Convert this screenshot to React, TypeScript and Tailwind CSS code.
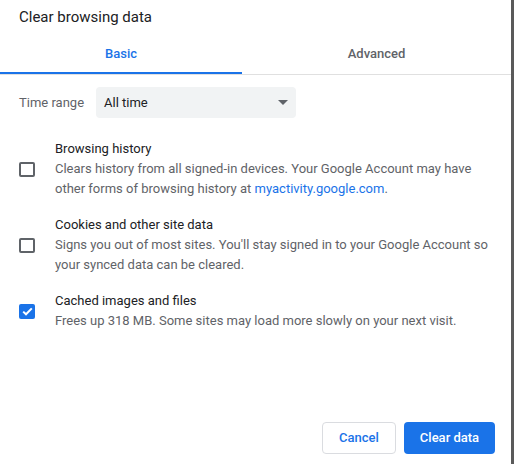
import React, { useState } from 'react';

type Item = {
  id: string;
  title: string;
  lines: React.ReactNode[];
};

const items: Item[] = [
  {
    id: 'history',
    title: 'Browsing history',
    lines: [
      'Clears history from all signed-in devices. Your Google Account may have',
      <>
        other forms of browsing history at <span className="text-[#1a73e8]">myactivity.google.com</span>.
      </>,
    ],
  },
  {
    id: 'cookies',
    title: 'Cookies and other site data',
    lines: [
      "Signs you out of most sites. You'll stay signed in to your Google Account so",
      'your synced data can be cleared.',
    ],
  },
  {
    id: 'cache',
    title: 'Cached images and files',
    lines: ['Frees up 318 MB. Some sites may load more slowly on your next visit.'],
  },
];

const Checkbox: React.FC<{ checked: boolean; onToggle: () => void }> = ({ checked, onToggle }) => (
  <button
    onClick={onToggle}
    className={`flex h-[15px] w-4 shrink-0 items-center justify-center rounded-[2px] ${
      checked ? 'bg-[#1a73e8]' : 'border-2 border-[#5f6368] bg-white'
    }`}
  >
    {checked && (
      <svg width="11" height="9" viewBox="0 0 11 9" fill="none">
        <path d="M1.2 4.6 L4 7.3 L9.8 1.4" stroke="white" strokeWidth="2" />
      </svg>
    )}
  </button>
);

const App: React.FC = () => {
  const [tab, setTab] = useState<'basic' | 'advanced'>('basic');
  const [checked, setChecked] = useState<Record<string, boolean>>({ history: false, cookies: false, cache: true });

  return (
    <div className="flex h-[464px] w-[514px] font-['Roboto',sans-serif] antialiased">
      <div className="flex flex-1 flex-col bg-white">
        {/* Title */}
        <div className="h-[33px] pl-[19px] pt-[7px] text-[15px] leading-5 text-[#202124]">Clear browsing data</div>

        {/* Tabs */}
        <div className="flex border-b border-[#e0e0e0]">
          <button
            onClick={() => setTab('basic')}
            className={`relative h-[41px] w-[242px] text-[13px] font-medium ${tab === 'basic' ? 'text-[#1a73e8]' : 'text-[#5f6368]'}`}
          >
            Basic
            {tab === 'basic' && <span className="absolute bottom-0 left-0 h-[2px] w-full bg-[#1a73e8]" />}
          </button>
          <button
            onClick={() => setTab('advanced')}
            className={`relative h-[41px] flex-1 text-[13px] font-medium ${tab === 'advanced' ? 'text-[#1a73e8]' : 'text-[#5f6368]'}`}
          >
            Advanced
            {tab === 'advanced' && <span className="absolute bottom-0 left-0 h-[2px] w-full bg-[#1a73e8]" />}
          </button>
        </div>

        {/* Time range */}
        <div className="mt-3 flex items-center pl-[19px]">
          <span className="w-[77px] text-[13px] text-[#5f6368]">Time range</span>
          <div className="flex h-[31px] w-[200px] items-center justify-between rounded-[4px] bg-[#f1f3f4] pl-2 pr-[8px] text-[13px] text-[#202124]">
            <span>All time</span>
            <svg width="10" height="5" viewBox="0 0 10 5">
              <path d="M0 0 L10 0 L5 5 Z" fill="#5f6368" />
            </svg>
          </div>
        </div>

        {/* Options */}
        <div className="mt-[21px] flex flex-col gap-4">
          {items.map((item) => (
            <div key={item.id} className="flex items-center pl-[19px]">
              <Checkbox
                checked={checked[item.id]}
                onToggle={() => setChecked((c) => ({ ...c, [item.id]: !c[item.id] }))}
              />
              <div className="ml-5 flex flex-col text-[13px] leading-5">
                <span className="text-[#202124]">{item.title}</span>
                {item.lines.map((line, i) => (
                  <span key={i} className="whitespace-nowrap text-[#5f6368]">
                    {line}
                  </span>
                ))}
              </div>
            </div>
          ))}
        </div>

        {/* Actions */}
        <div className="mt-auto mb-[10px] flex justify-end gap-2 pr-4">
          <button className="h-8 w-[74px] rounded-[4px] border border-[#dadce0] bg-white text-[13px] font-medium text-[#1a73e8]">
            Cancel
          </button>
          <button className="h-8 w-[91px] rounded-[4px] bg-[#1a73e8] text-[13px] font-medium text-white">
            Clear data
          </button>
        </div>
      </div>
      <div className="w-[3px] bg-[#5a5a5a]" />
    </div>
  );
};

export default App;
